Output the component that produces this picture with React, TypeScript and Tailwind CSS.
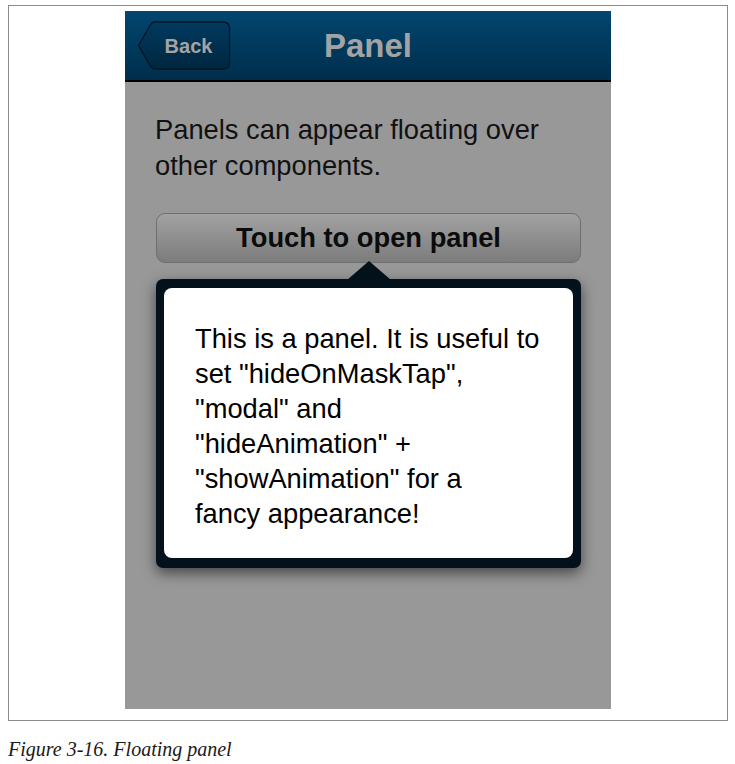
import React from "react";

function BackButton() {
  return (
    <div className="relative w-[94px] h-[50px] flex items-center justify-center">
      <svg className="absolute inset-0" width="94" height="50" viewBox="0 0 94 50">
        <defs>
          <linearGradient id="bb" x1="0" y1="0" x2="0" y2="1">
            <stop offset="0" stopColor="#013a60" />
            <stop offset="1" stopColor="#00263f" />
          </linearGradient>
        </defs>
        <path
          d="M1.5 24.5 L14 3 Q15.2 1 17.5 1 H86 Q92.5 1 92.5 7.5 V41.5 Q92.5 48 86 48 H17.5 Q15.2 48 14 46 Z"
          fill="url(#bb)"
          stroke="#001423"
          strokeWidth="1.3"
        />
      </svg>
      <span className="relative pl-[9px] text-[20px] font-bold text-[#a4a4a4] leading-none">Back</span>
    </div>
  );
}

export default function App() {
  const sans = { fontFamily: '"Liberation Sans", Arial, sans-serif' };
  return (
    <div className="bg-white w-[735px] h-[764px] pt-[5px] pl-[8px]" style={sans}>
      <div className="w-[720px] h-[716px] border border-[#8c8c8c] flex justify-center pt-[5px]">
        <div className="w-[486px] h-[698px] bg-[#989898] flex flex-col">
          <div className="h-[71px] bg-gradient-to-b from-[#02466f] to-[#002e4c] border-b-2 border-black grid grid-cols-[1fr_auto_1fr] items-center px-[12px]">
            <div className="flex items-center pt-[1px]">
              <BackButton />
            </div>
            <div className="text-[33px] font-bold text-[#a3a3a3] leading-none">Panel</div>
            <div />
          </div>
          <div className="px-[30px] pt-[30px] flex flex-col">
            <p className="text-[27.3px] leading-[36px] text-[#111111]">
              Panels can appear floating over
              <br />
              other components.
            </p>
            <div className="mt-[29px] ml-[1px] h-[50px] rounded-[9px] border border-[#6f6f6f] bg-gradient-to-b from-[#a2a2a2] to-[#7c7c7c] flex items-center justify-center">
              <span className="text-[27.3px] font-bold text-[#0b0b0b] leading-none">Touch to open panel</span>
            </div>
            <div className="relative mt-[16px] ml-[1px] rounded-[7px] bg-[#03111a] pt-[9px] px-[8px] pb-[10px] shadow-[0_5px_14px_rgba(0,0,0,0.55)]">
              <svg className="absolute left-[191px] top-[-18px]" width="44" height="19" viewBox="0 0 44 19">
                <path d="M0 19 L22 0 L44 19 Z" fill="#03111a" />
              </svg>
              <div className="bg-white rounded-[8px] pl-[31px] pt-[33px] pb-[27px] text-[27.3px] leading-[35px] text-black whitespace-nowrap">
                This is a panel. It is useful to
                <br />
                set "hideOnMaskTap",
                <br />
                "modal" and
                <br />
                "hideAnimation" +
                <br />
                "showAnimation" for a
                <br />
                fancy appearance!
              </div>
            </div>
          </div>
        </div>
      </div>
      <div
        className="mt-[16px] text-[20px] leading-[24px] italic text-[#1a1a1a]"
        style={{ fontFamily: '"Liberation Serif", "Times New Roman", serif' }}
      >
        Figure 3-16. Floating panel
      </div>
    </div>
  );
}
